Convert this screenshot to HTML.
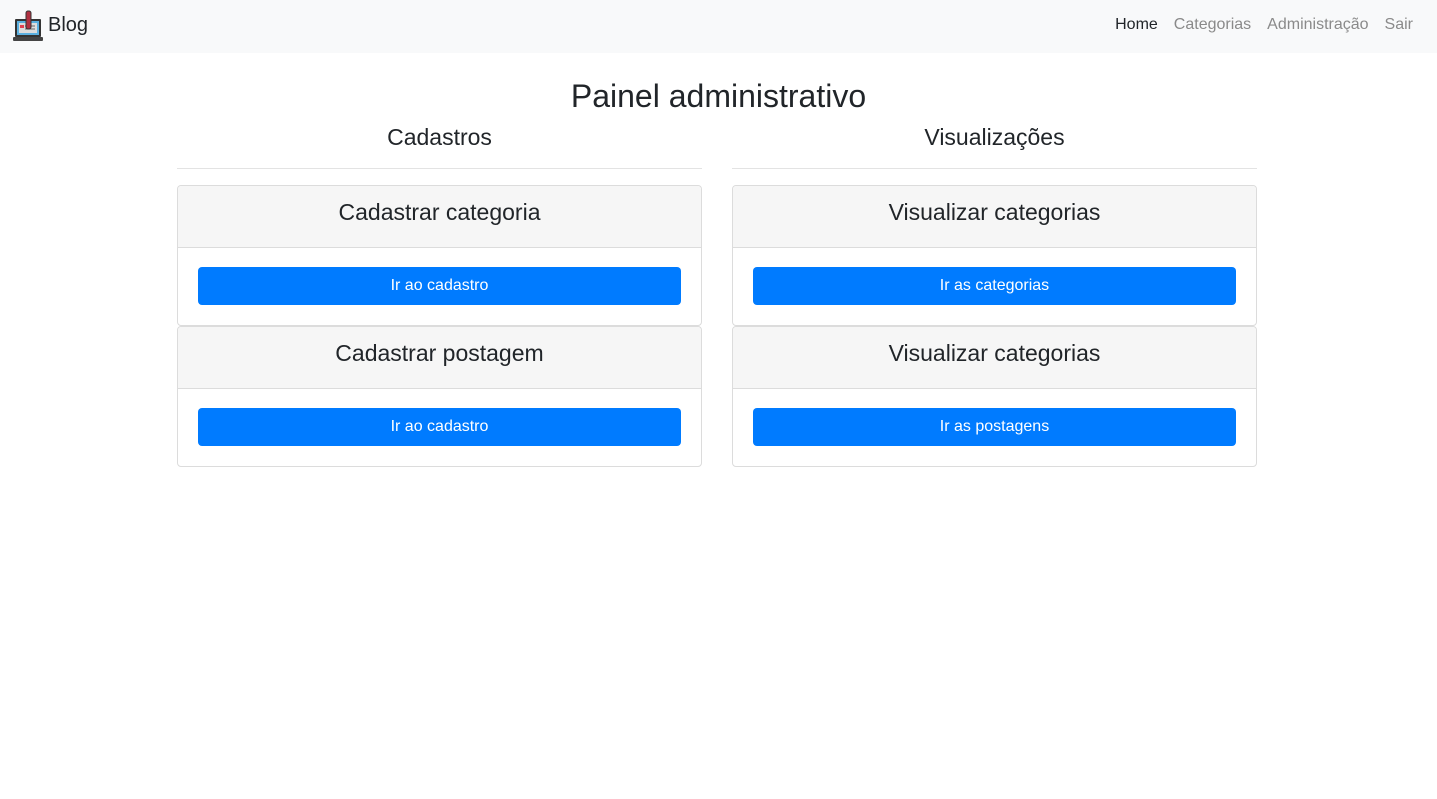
<!DOCTYPE html>
<html><head><meta charset="utf-8"><style>
*{box-sizing:border-box;margin:0;padding:0}
body{width:1437px;height:799px;background:#fff;font-family:"Liberation Sans",sans-serif;color:#212529;position:relative;overflow:hidden}
nav{position:absolute;left:0;top:0;width:1437px;height:53px;background:#f8f9fa}
.brand{position:absolute;left:48px;top:14px;font-size:20px;color:#212529}
.links{position:absolute;right:24px;top:16px;font-size:16px}
.links span{margin-left:16px;color:#8a8a8a}
.links span.a{color:#212529}
.c{position:absolute;text-align:center}
h1{position:absolute;left:0;width:1437px;top:78px;text-align:center;font-weight:400;font-size:32px}
.sub{top:124px;width:525px;font-size:23px}
.hr{position:absolute;width:525px;height:1px;background:#e3e3e3;top:168px}
.card{position:absolute;width:525px;height:141px;border:1px solid #dcdcdc;border-radius:4px;background:#fff}
.card .h{height:62px;background:#f6f6f6;border-bottom:1px solid #dcdcdc;text-align:center;font-size:23px;padding-top:13px;border-radius:4px 4px 0 0}
.btn{position:absolute;left:20px;top:81px;width:483px;height:38px;background:#007bff;border-radius:4px;color:#fff;text-align:center;font-size:16px;line-height:38px}
</style></head><body>
<nav>
<svg style="position:absolute;left:12px;top:9px" width="32" height="33" viewBox="0 0 32 33">
<rect x="3" y="10" width="26" height="18" rx="1" fill="#333"/>
<rect x="5" y="12" width="22" height="14" fill="#5bb0e0"/>
<rect x="7" y="14" width="18" height="10" fill="#ddd"/>
<rect x="8" y="16" width="4" height="3" fill="#e04050"/>
<line x1="13" y1="17" x2="23" y2="17" stroke="#666"/><line x1="13" y1="20" x2="23" y2="20" stroke="#666"/>
<rect x="1" y="28" width="30" height="4" rx="1" fill="#444"/>
<rect x="14" y="2" width="5" height="18" rx="2" fill="#b03040" stroke="#333"/>
</svg>
<div class="brand">Blog</div>
<div class="links"><span class="a">Home</span><span>Categorias</span><span>Administração</span><span>Sair</span></div>
</nav>
<h1>Painel administrativo</h1>
<div class="c sub" style="left:177px">Cadastros</div>
<div class="c sub" style="left:732px">Visualizações</div>
<div class="hr" style="left:177px"></div><div class="hr" style="left:732px"></div>
<div class="card" style="left:177px;top:185px"><div class="h">Cadastrar categoria</div><div class="btn">Ir ao cadastro</div></div>
<div class="card" style="left:177px;top:326px"><div class="h">Cadastrar postagem</div><div class="btn">Ir ao cadastro</div></div>
<div class="card" style="left:732px;top:185px"><div class="h">Visualizar categorias</div><div class="btn">Ir as categorias</div></div>
<div class="card" style="left:732px;top:326px"><div class="h">Visualizar categorias</div><div class="btn">Ir as postagens</div></div>
</body></html>
